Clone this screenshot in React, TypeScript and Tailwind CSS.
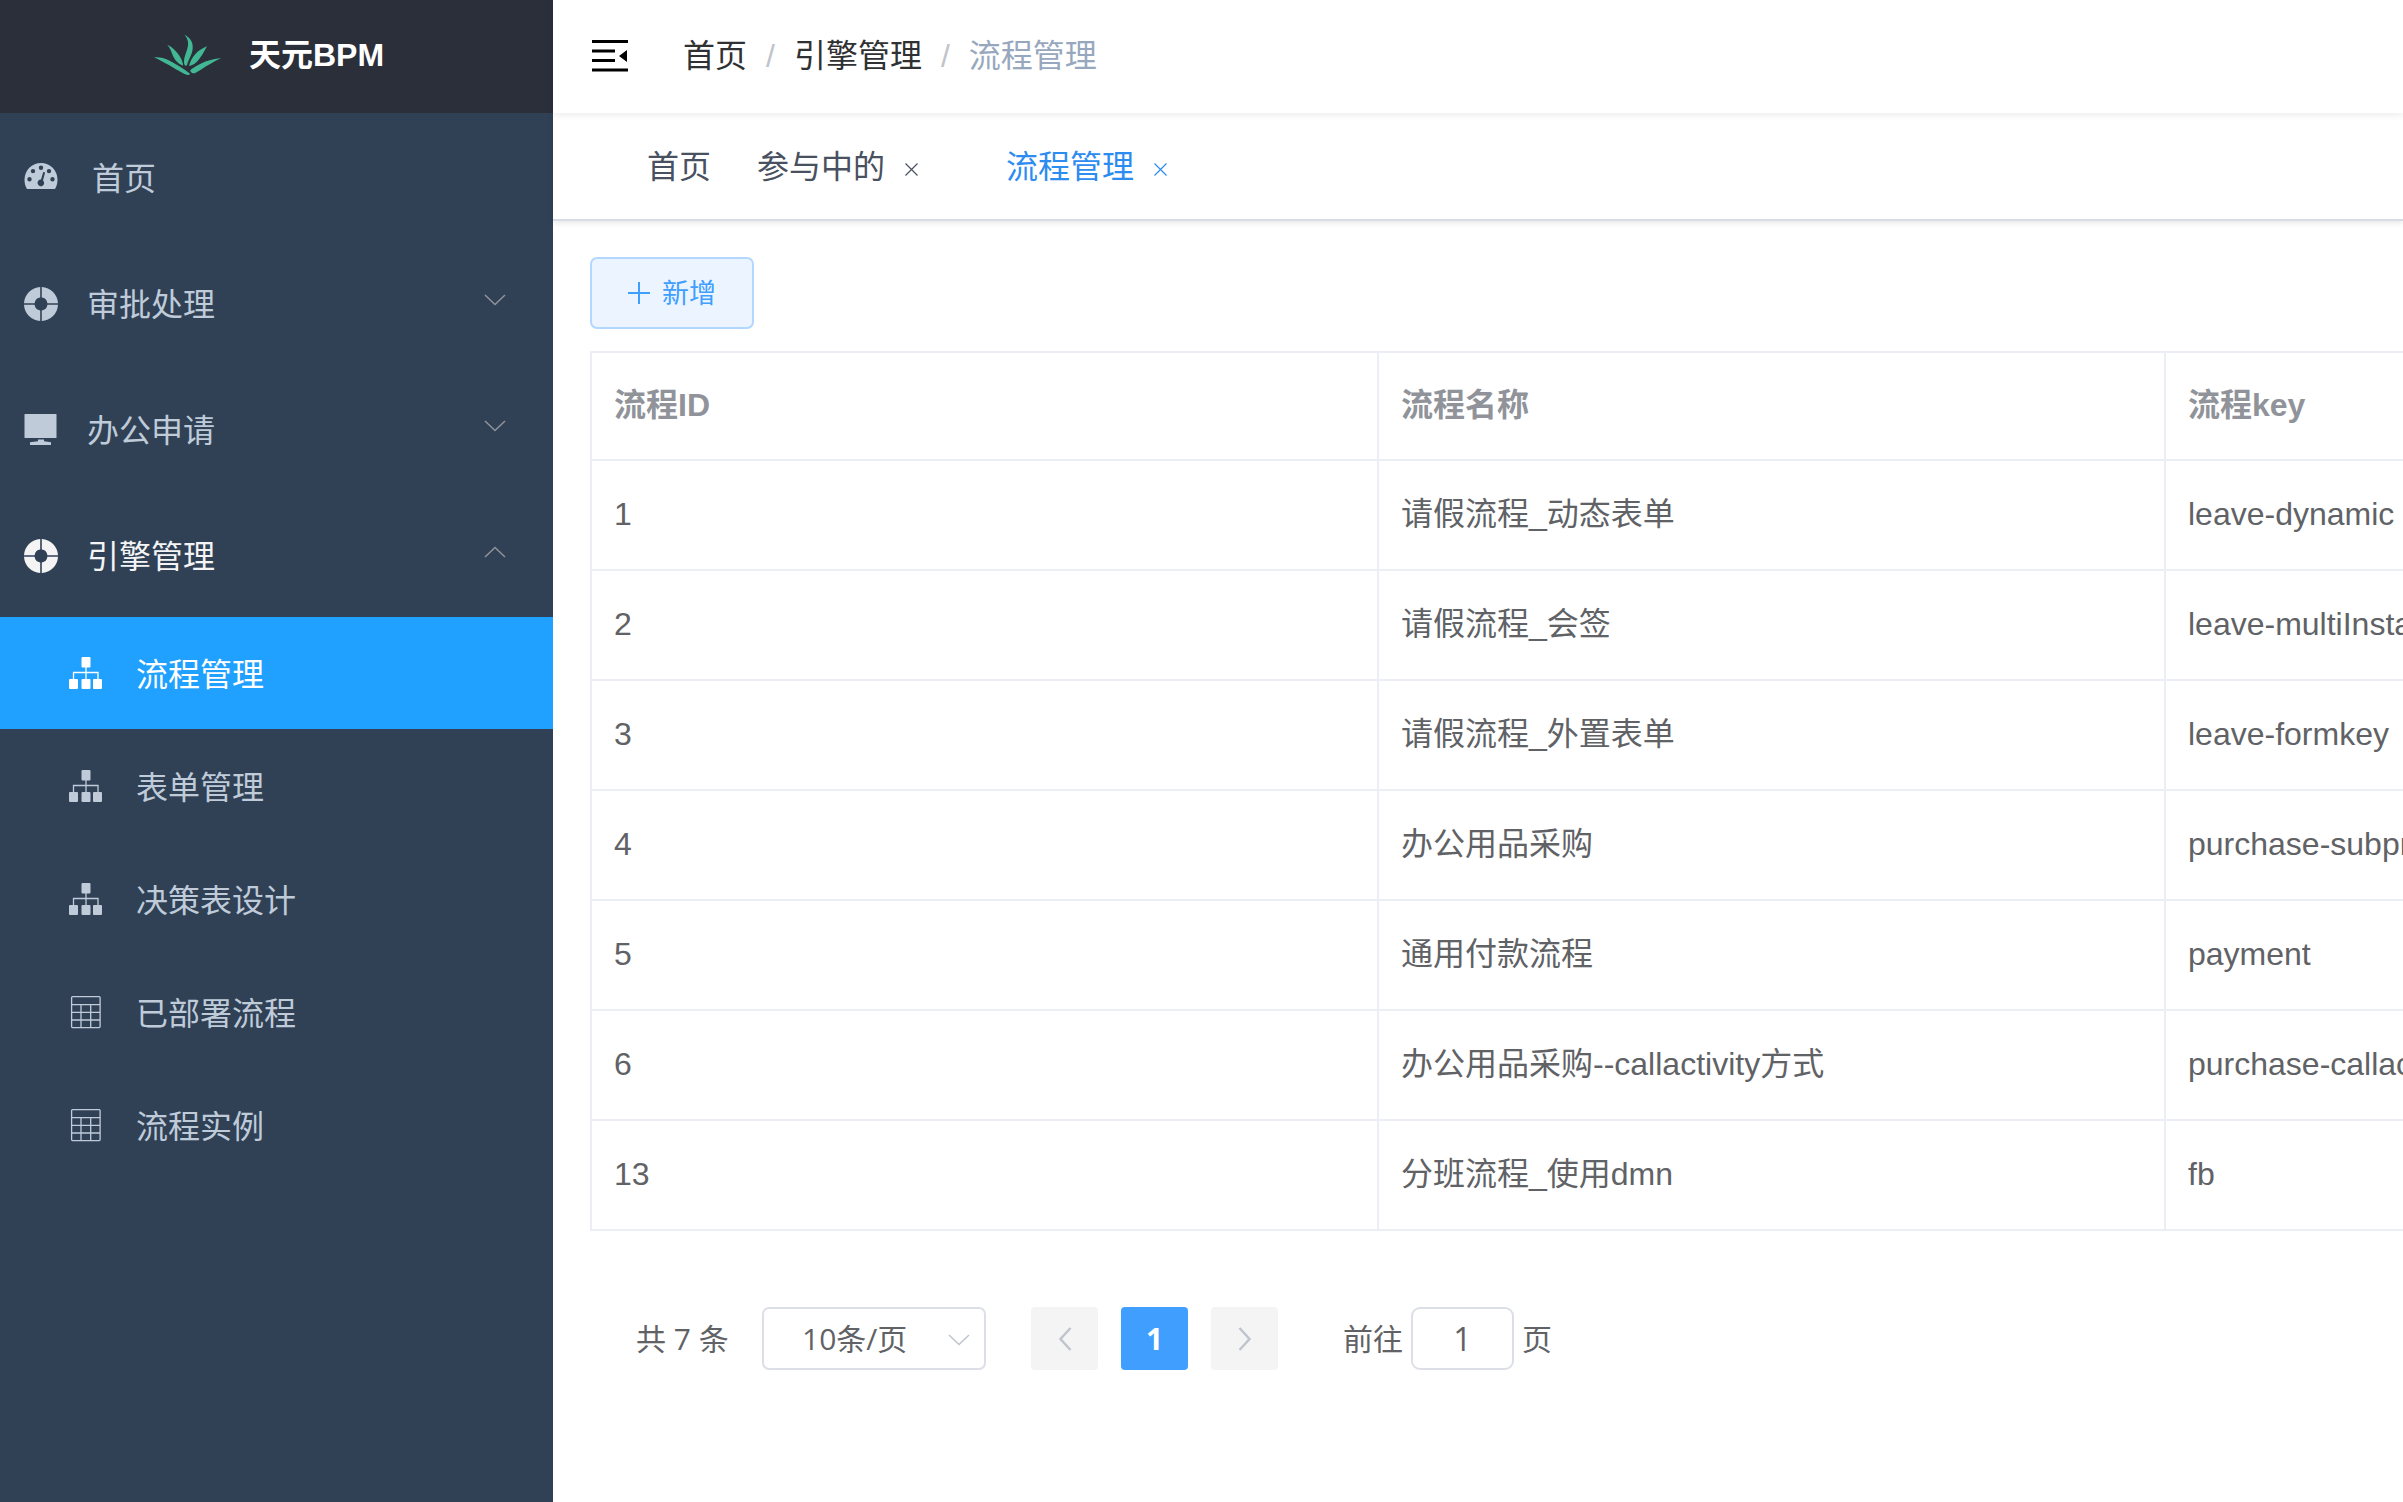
import type { ReactNode } from 'react';

type IconName = 'dashboard' | 'component' | 'monitor' | 'tree' | 'table';

interface MenuEntry {
  label: string;
  icon: IconName;
  active?: boolean;
}

interface SubMenu extends MenuEntry {
  open?: boolean;
  children?: MenuEntry[];
}

interface ProcessRow {
  id: number;
  name: string;
  key: string;
}

const menus: SubMenu[] = [
  { label: '审批处理', icon: 'component' },
  { label: '办公申请', icon: 'monitor' },
  {
    label: '引擎管理',
    icon: 'component',
    open: true,
    children: [
      { label: '流程管理', icon: 'tree', active: true },
      { label: '表单管理', icon: 'tree' },
      { label: '决策表设计', icon: 'tree' },
      { label: '已部署流程', icon: 'table' },
      { label: '流程实例', icon: 'table' },
    ],
  },
];

const rows: ProcessRow[] = [
  { id: 1, name: '请假流程_动态表单', key: 'leave-dynamic' },
  { id: 2, name: '请假流程_会签', key: 'leave-multiInstance' },
  { id: 3, name: '请假流程_外置表单', key: 'leave-formkey' },
  { id: 4, name: '办公用品采购', key: 'purchase-subprocess' },
  { id: 5, name: '通用付款流程', key: 'payment' },
  { id: 6, name: '办公用品采购--callactivity方式', key: 'purchase-callactivity' },
  { id: 13, name: '分班流程_使用dmn', key: 'fb' },
];

function MenuIcon({ name }: { name: IconName }) {
  switch (name) {
    case 'dashboard':
      return (
        <svg viewBox="0 0 34 34" className="w-[34px] h-[34px] shrink-0" fill="currentColor">
          <path
            fillRule="evenodd"
            d="M3 30C1.200 27 .5 24 .5 20.500a16.500 16.500 0 0 1 33 0c0 3.500-.7 6.500-2.500 9.500ZM17 6.500a2.200 2.200 0 1 0 0 4.400 2.200 2.200 0 0 0 0-4.400ZM9 9.900a2.200 2.200 0 1 0 0 4.400 2.200 2.200 0 0 0 0-4.400Zm16 0a2.200 2.200 0 1 0 0 4.400 2.200 2.200 0 0 0 0-4.400ZM5.500 18a2.200 2.200 0 1 0 0 4.400 2.200 2.200 0 0 0 0-4.400Zm23 0a2.200 2.200 0 1 0 0 4.400 2.200 2.200 0 0 0 0-4.400ZM19.200 12.900l-2.200 7.700a3.300 3.300 0 1 0 2 .8l2.100-7.900Z"
          />
        </svg>
      );
    case 'component':
      return (
        <svg viewBox="0 0 34 34" className="w-[34px] h-[34px] shrink-0" fill="currentColor">
          <path d="M16.200 0v10.600A6.500 6.500 0 0 0 10.600 16.200H0A17 17 0 0 1 16.200 0ZM17.800 0v10.600a6.500 6.500 0 0 1 5.600 5.600H34A17 17 0 0 0 17.800 0ZM16.200 34V23.400a6.500 6.500 0 0 1-5.600-5.600H0a17 17 0 0 0 16.200 16.200ZM17.800 34V23.400a6.500 6.500 0 0 0 5.600-5.600H34a17 17 0 0 1-16.200 16.200Z" />
        </svg>
      );
    case 'monitor':
      return (
        <svg viewBox="0 0 34 34" className="w-[34px] h-[34px] shrink-0" fill="currentColor">
          <path d="M1 1h31a.5.5 0 0 1 .5.5v23a.5.5 0 0 1-.5.5H1a.5.5 0 0 1-.5-.5v-23A.5.5 0 0 1 1 1ZM14 26.500h6v1.800l7 .9v2.800H6v-2.800l8-.9Z" />
        </svg>
      );
    case 'tree':
      return (
        <svg viewBox="0 0 34 34" className="w-[34px] h-[34px] shrink-0" fill="currentColor">
          <rect x="12.500" y="1" width="9" height="10.500" rx="1" />
          <rect x="0" y="23" width="9" height="10" rx="1" />
          <rect x="12.500" y="23" width="9" height="10" rx="1" />
          <rect x="24" y="23" width="9" height="10" rx="1" />
          <path d="M4.500 23v-6.500h24.500V23M17 11v12" fill="none" stroke="currentColor" strokeWidth="1.300" />
        </svg>
      );
    case 'table':
      return (
        <svg
          viewBox="0 0 34 34"
          className="w-[34px] h-[34px] shrink-0"
          fill="none"
          stroke="currentColor"
          strokeWidth="1.300"
        >
          <rect x="2.600" y="1.600" width="28.500" height="31" rx="1" />
          <path d="M2.600 9.600h28.500M2.600 17.300h28.500M2.600 25h28.500M12 9.600v23M21.700 9.600v23" />
        </svg>
      );
  }
}

function Chevron({ up = false, className }: { up?: boolean; className: string }) {
  return (
    <svg viewBox="0 0 22 12" className={className} fill="none" stroke="currentColor" strokeWidth="1.500">
      <path d={up ? 'M1 11 11 1.500 21 11' : 'M1 1l10 9.500L21 1'} />
    </svg>
  );
}

function CloseIcon() {
  return (
    <svg viewBox="0 0 13 13" className="w-[13px] h-[13px]" fill="none" stroke="currentColor" strokeWidth="1.200">
      <path d="m.5.5 12 12M12.500.5l-12 12" />
    </svg>
  );
}

function Logo() {
  return (
    <svg viewBox="42 38 201 126" className="w-[67px] h-[42px] shrink-0" fill="#42b793">
      <path d="M133 40c17 8 27 22 25 42-2 20-14 34-17 50-5 4-10-2-9-14 2-20 14-34 12-56-1-8-5-16-11-22Z" />
      <path d="M82 70c14 6 30 22 38 36 6 10 10 20 9 27-15-5-25-17-31-31-4-12-8-22-16-32Z" />
      <path d="M201 75c-11 19-15 29-25 40-8 10-18 17-29 19 3-14 10-26 20-37 9-10 21-16 34-22Z" />
      <path d="M42 108c18-1 32 3 44 9 22 12 45 25 65 41-7 6-15 1-23-3-28-15-50-30-86-47Z" />
      <path d="M243 111c-27 2-47 9-67 19-12 6-20 11-26 18 4 6 9 10 16 7 20-11 40-27 77-44Z" />
    </svg>
  );
}

function Sidebar() {
  return (
    <aside className="w-[553px] shrink-0 bg-[#304156] text-[#bfcbd9]">
      <div className="flex items-center gap-7 h-[113px] pl-[154px] pb-1 bg-[#2b2f3a]">
        <Logo />
        <h1 className="font-bold text-white">天元BPM</h1>
      </div>
      <nav>
        <a href="#home" className="flex items-center gap-[34px] h-[126px] pl-6">
          <MenuIcon name="dashboard" />
          <span className="pt-1.5">首页</span>
        </a>
        {menus.map((menu) => (
          <div key={menu.label}>
            <button
              aria-expanded={Boolean(menu.open)}
              className={`flex items-center w-full h-[126px] gap-[29px] pt-1 pl-6 pr-[47px] ${menu.open ? 'text-[#f4f4f5]' : ''}`}
            >
              <MenuIcon name={menu.icon} />
              <span className="pt-0.5">{menu.label}</span>
              <Chevron up={menu.open} className="w-[22px] h-3 ml-auto mb-2 text-[#909399]" />
            </button>
            {menu.children && (
              <div className="flex flex-col gap-px">
                {menu.children.map((item) => (
                  <a
                    key={item.label}
                    href={`#${item.label}`}
                    className={`flex items-center gap-[33px] h-28 pl-[69px] ${item.active ? 'bg-[#20a0ff] text-white' : ''}`}
                  >
                    <MenuIcon name={item.icon} />
                    <span className="pt-1">{item.label}</span>
                  </a>
                ))}
              </div>
            )}
          </div>
        ))}
      </nav>
    </aside>
  );
}

function Navbar() {
  return (
    <header className="relative flex items-center h-[113px] pl-[39px] pb-0.5 bg-white shadow-[0_1px_8px_rgba(0,21,41,0.1)]">
      <button aria-label="收起菜单" className="text-black">
        <svg viewBox="0 0 36 32" className="w-9 h-8" fill="currentColor">
          <path d="M0 0h36v3H0zM0 9.500h23v3H0zM0 19h23v3H0zM0 28.500h36v3H0zM35 10v12l-8-6z" />
        </svg>
      </button>
      <nav aria-label="面包屑" className="flex items-center gap-[19px] pl-[55px] text-[#303133]">
        <a href="#home">首页</a>
        <span className="text-[#c0c4cc]">/</span>
        <a href="#engine">引擎管理</a>
        <span className="text-[#c0c4cc]">/</span>
        <span className="text-[#97a8be]">流程管理</span>
      </nav>
    </header>
  );
}

function Tab({ label, active = false }: { label: string; active?: boolean }) {
  return (
    <div className={`flex items-center gap-5 ${active ? 'text-[#2d8cf0]' : ''}`}>
      <a href={`#${label}`}>{label}</a>
      <button aria-label={`关闭${label}`} className="pt-1">
        <CloseIcon />
      </button>
    </div>
  );
}

function TagsView() {
  return (
    <div className="flex items-center h-[108px] pt-0.5 pl-[94px] border-b-2 border-[#d8dce5] text-[#495060] shadow-[0_2px_6px_rgba(0,0,0,0.1)]">
      <a href="#home" className="mr-[46px]">
        首页
      </a>
      <div className="flex gap-[88px]">
        <Tab label="参与中的" />
        <Tab label="流程管理" active />
      </div>
    </div>
  );
}

function HeadCell({ children }: { children: ReactNode }) {
  return (
    <th className="h-[108px] px-[22px] pb-0.5 border-r-2 border-b-2 border-[#ebeef5] text-left font-bold text-[#909399]">
      {children}
    </th>
  );
}

function Cell({ children }: { children: ReactNode }) {
  return (
    <td className="h-[110px] px-[22px] pb-0.5 border-r-2 border-b-2 border-[#ebeef5] whitespace-nowrap">
      {children}
    </td>
  );
}

function ProcessTable() {
  return (
    <table className="table-fixed w-[2363px] border-separate border-spacing-0 border-t-2 border-l-2 border-[#ebeef5] text-[#606266]">
      <thead>
        <tr>
          <HeadCell>流程ID</HeadCell>
          <HeadCell>流程名称</HeadCell>
          <HeadCell>流程key</HeadCell>
        </tr>
      </thead>
      <tbody>
        {rows.map((row) => (
          <tr key={row.id}>
            <Cell>{row.id}</Cell>
            <Cell>{row.name}</Cell>
            <Cell>{row.key}</Cell>
          </tr>
        ))}
      </tbody>
    </table>
  );
}

function Pagination() {
  return (
    <div className="flex items-center pt-[76px] pl-[46px] font-['Open_Sans','Noto_Sans_CJK_SC',sans-serif] text-[30px] leading-10 text-[#606266]">
      <span className="w-[126px]">共 7 条</span>
      <div className="relative">
        <select
          aria-label="每页条数"
          className="block appearance-none w-56 h-[63px] pl-[38px] border-2 border-[#dcdfe6] rounded-[7px] bg-white"
        >
          <option>10条/页</option>
        </select>
        <Chevron className="absolute right-4 top-[27px] w-[22px] h-3 text-[#c0c4cc]" />
      </div>
      <div className="flex gap-[23px] ml-[45px]">
        <button
          disabled
          aria-label="上一页"
          className="flex items-center justify-center w-[67px] h-[63px] rounded bg-[#f4f4f5] text-[#c0c4cc]"
        >
          <svg viewBox="0 0 14 24" className="w-[14px] h-6" fill="none" stroke="currentColor" strokeWidth="2.500">
            <path d="M12.500 1 2.500 12l10 11" />
          </svg>
        </button>
        <button aria-current="page" className="w-[67px] h-[63px] rounded bg-[#409eff] font-bold text-white">
          1
        </button>
        <button
          disabled
          aria-label="下一页"
          className="flex items-center justify-center w-[67px] h-[63px] rounded bg-[#f4f4f5] text-[#c0c4cc]"
        >
          <svg viewBox="0 0 14 24" className="w-[14px] h-6" fill="none" stroke="currentColor" strokeWidth="2.500">
            <path d="m1.500 1 10 11-10 11" />
          </svg>
        </button>
      </div>
      <label className="flex items-center gap-2 ml-[65px]">
        前往
        <input
          type="text"
          defaultValue="1"
          className="w-[103px] h-[63px] border-2 border-[#dcdfe6] rounded-[9px] text-center text-[32px]"
        />
        页
      </label>
    </div>
  );
}

export default function App() {
  return (
    <div className="flex min-h-screen bg-white font-['Liberation_Sans','Noto_Sans_CJK_SC',sans-serif] text-[32px] leading-10">
      <Sidebar />
      <div className="flex-1 min-w-0">
        <Navbar />
        <TagsView />
        <main className="pt-9 pl-[37px] overflow-hidden">
          <button className="flex items-center gap-3 h-[72px] px-9 mb-[22px] border-2 border-[#b3d8ff] rounded-[7px] bg-[#ecf5ff] text-[27px] text-[#409eff]">
            <svg viewBox="0 0 22 22" className="w-[22px] h-[22px]" fill="none" stroke="currentColor" strokeWidth="2">
              <path d="M11 0v22M0 11h22" />
            </svg>
            <span className="pt-0.5">新增</span>
          </button>
          <ProcessTable />
          <Pagination />
        </main>
      </div>
    </div>
  );
}
